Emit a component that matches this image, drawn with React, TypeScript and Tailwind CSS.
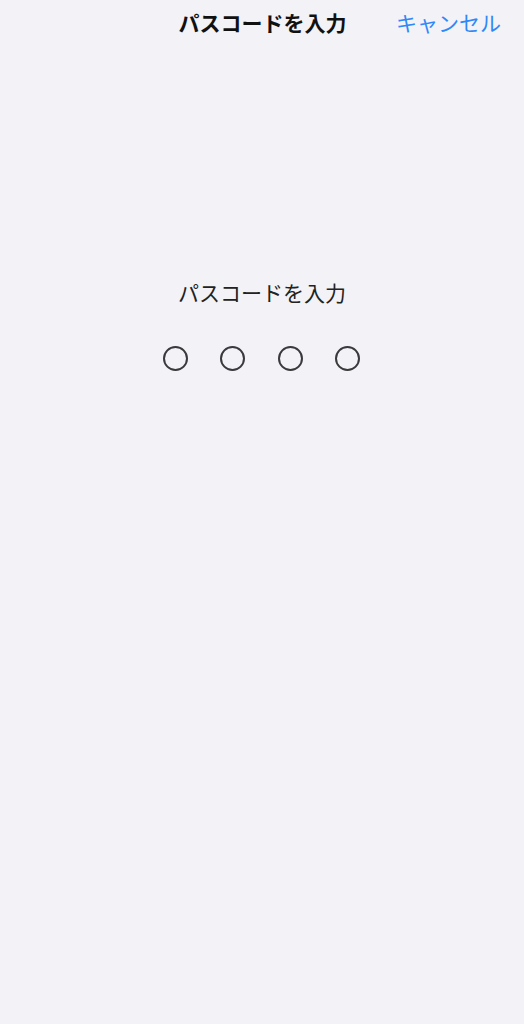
export default function App() {
  const font = { fontFamily: '"Noto Sans CJK JP", "Noto Sans", sans-serif' }
  return (
    <div className="w-[524px] h-[1024px] bg-[#f2f2f7] flex flex-col" style={font}>
      {/* Nav bar */}
      <div className="relative h-[44px] flex items-center justify-center">
        <span className="text-[21px] font-bold text-[#111] leading-none ml-[1px]">パスコードを入力</span>
        <span className="absolute right-[23px] top-1/2 -translate-y-1/2 text-[21px] text-[#2f88f7] leading-none">キャンセル</span>
      </div>

      {/* Passcode entry */}
      <div className="flex flex-col items-center mt-[238px]">
        <span className="text-[21px] text-[#222] leading-none">パスコードを入力</span>
        <div className="flex gap-[32.5px] mt-[43px] -ml-[1px]">
          {[0, 1, 2, 3].map((i) => (
            <div key={i} className="w-[25px] h-[25px] rounded-full border-2 border-[#3a3a3c]" />
          ))}
        </div>
      </div>
    </div>
  )
}
